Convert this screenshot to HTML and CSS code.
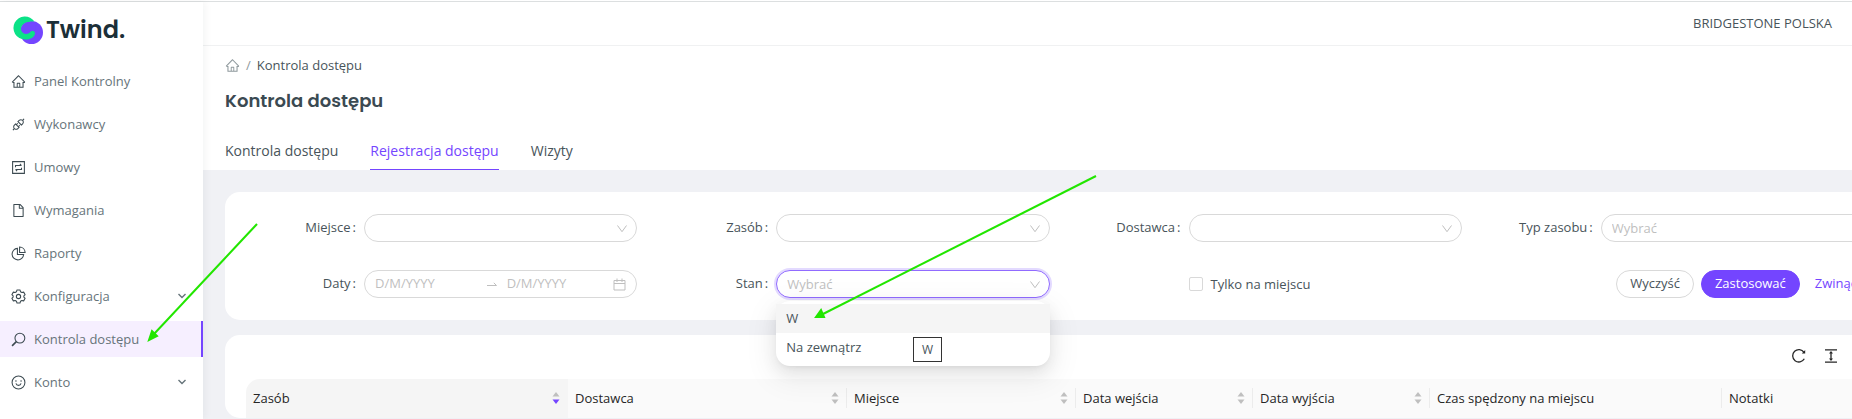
FILE: index.html
```html
<!DOCTYPE html>
<html lang="pl">
<head>
<meta charset="utf-8">
<title>Kontrola dostępu – Twind</title>
<link rel="stylesheet" href="styles.css">
</head>
<body>
<svg class="sprite" aria-hidden="true">
  <symbol id="i-home" viewBox="0 0 1024 1024"><path d="M946.500 505L560.100 118.800l-25.900-25.900a31.500 31.500 0 0 0-44.400 0L77.500 505a63.900 63.900 0 0 0-18.800 46c.4 35.200 29.700 63.300 64.900 63.300h42.500V940h691.800V614.300h43.400c17.100 0 33.200-6.700 45.300-18.800a63.600 63.600 0 0 0 18.700-45.300c0-17-6.700-33.100-18.800-45.200zM568 868H456V664h112v204zm217.900-325.700V868H632V640c0-22.100-17.900-40-40-40H432c-22.100 0-40 17.900-40 40v228H238.100V542.300h-96l370-369.700 23.100 23.100L882 542.300h-96.100z"/></symbol>
  <symbol id="i-api" viewBox="0 0 1024 1024"><path d="M917.700 148.800l-42.400-42.400c-1.600-1.600-3.600-2.300-5.700-2.300s-4.100.8-5.700 2.300l-76.100 76.100a199.270 199.270 0 0 0-112.100-34.300c-51.200 0-102.400 19.500-141.500 58.600L432.300 308.700a8.030 8.030 0 0 0 0 11.300L704 591.700c1.600 1.600 3.600 2.300 5.700 2.300 2 0 4.100-.8 5.700-2.300l101.900-101.900c68.900-69 77-175.700 24.300-253.500l76.100-76.100c3.100-3.200 3.100-8.300 0-11.400zM769.100 441.700l-59.400 59.400-186.800-186.800 59.400-59.400c24.900-24.900 58.100-38.700 93.400-38.700 35.300 0 68.400 13.700 93.400 38.700 24.900 24.900 38.700 58.100 38.700 93.400 0 35.300-13.800 68.400-38.700 93.400zm-190.200 105a8.030 8.030 0 0 0-11.300 0L501 613.300 410.700 523l66.700-66.700c3.100-3.100 3.100-8.200 0-11.300L441 408.600a8.030 8.030 0 0 0-11.300 0L363 475.300l-43-43a7.850 7.850 0 0 0-5.700-2.300c-2 0-4.100.8-5.700 2.300L206.800 534.200c-68.900 69-77 175.700-24.300 253.500l-76.100 76.100a8.030 8.030 0 0 0 0 11.300l42.400 42.400c1.600 1.600 3.600 2.300 5.700 2.300s4.100-.8 5.700-2.300l76.100-76.100c33.700 22.900 72.900 34.300 112.100 34.300 51.200 0 102.400-19.500 141.500-58.600l101.900-101.900c3.100-3.100 3.100-8.200 0-11.300l-43-43 66.700-66.700c3.100-3.100 3.100-8.200 0-11.300l-36.600-36.200zM441.700 769.100a131.320 131.320 0 0 1-93.400 38.700c-35.300 0-68.400-13.700-93.400-38.700a131.320 131.320 0 0 1-38.700-93.400c0-35.300 13.700-68.400 38.700-93.400l59.400-59.400 186.800 186.800-59.400 59.400z"/></symbol>
  <symbol id="i-contract" viewBox="0 0 14 14"><g fill="none" stroke="currentColor"><path d="M1.500 1.500h11v11h-11z"/><path d="M4.200 6.800V5.200h5.400M8.300 3.700l1.500 1.500M9.800 7.200v1.600H4.400M5.700 10.300L4.200 8.800"/></g></symbol>
  <symbol id="i-file" viewBox="0 0 1024 1024"><path d="M854.600 288.600L639.400 73.400c-6-6-14.100-9.400-22.600-9.400H192c-17.700 0-32 14.300-32 32v832c0 17.700 14.300 32 32 32h640c17.700 0 32-14.300 32-32V311.300c0-8.500-3.400-16.700-9.400-22.700zM790.200 326H602V137.800L790.200 326zm1.800 562H232V136h302v216a42 42 0 0 0 42 42h216v494z"/></symbol>
  <symbol id="i-pie" viewBox="0 0 14 14"><g fill="none" stroke="currentColor"><path d="M6 2.200A5.400 5.400 0 1 0 11.800 8H6z"/><path d="M8 .9V6h5.200A5.400 5.400 0 0 0 8 .9z"/></g></symbol>
  <symbol id="i-gear" viewBox="0 0 14 14"><g fill="none" stroke="currentColor" stroke-linejoin="round"><path d="M5.600.9h2.800l.5 1.700 1.200.7 1.700-.4 1.400 2.400L12 6.500v1l1.200 1.200-1.400 2.400-1.700-.4-1.200.7-.5 1.700H5.600l-.5-1.700-1.200-.7-1.700.4L.8 8.700 2 7.500v-1L.8 5.300l1.400-2.400 1.700.4 1.200-.7z"/><circle cx="7" cy="7" r="2"/></g></symbol>
  <symbol id="i-search" viewBox="0 0 14 14"><g fill="none" stroke="currentColor"><circle cx="8.300" cy="5.700" r="4.600"/><path d="M5 9L1 13" stroke-width="1.500"/></g></symbol>
  <symbol id="i-smile" viewBox="0 0 14 14"><circle cx="7" cy="7" r="6" fill="none" stroke="currentColor"/><path d="M4.600 7.900a2.500 2.500 0 0 0 4.800 0" fill="none" stroke="currentColor"/><circle cx="4.600" cy="5.500" r=".7"/><circle cx="9.400" cy="5.500" r=".7"/></symbol>
  <symbol id="i-down" viewBox="0 0 12 12"><path d="M1.500 2.500L6 8.700l4.500-6.200" fill="none" stroke="currentColor"/></symbol>
  <symbol id="i-chevron" viewBox="0 0 10 10"><path d="M1.500 3L5 6.500 8.500 3" fill="none" stroke="currentColor" stroke-width="1.400"/></symbol>
  <symbol id="i-swap" viewBox="0 0 12 12"><path d="M1 7.500h9.500L7.800 4.800" fill="none" stroke="currentColor"/></symbol>
  <symbol id="i-calendar" viewBox="0 0 13 13"><path d="M1 2.500h11v9.500H1zM1 5.500h11M4 .5v3.500M9 .5v3.500" fill="none" stroke="currentColor"/></symbol>
  <symbol id="i-sort-up" viewBox="0 0 8 5"><path d="M4 0l3.500 4.500h-7z"/></symbol>
  <symbol id="i-sort-down" viewBox="0 0 8 5"><path d="M4 5L.5.500h7z"/></symbol>
  <symbol id="i-reload" viewBox="0 0 16 16"><path d="M13.300 10.800A6.200 6.200 0 1 1 13 4.300" fill="none" stroke="currentColor" stroke-width="1.300"/><path d="M14.200 1.900v3.600h-3.400z"/></symbol>
  <symbol id="i-height" viewBox="0 0 16 16"><path d="M2 1.800h12M2 14.200h12M8 4.500v7" fill="none" stroke="currentColor" stroke-width="1.300"/><path d="M8 3l2 2.600H6zM8 13l2-2.600H6z"/></symbol>
</svg>

<div class="app">
  <aside class="sidebar">
    <a class="logo" href="#">
      <svg class="logo-mark" viewBox="0 0 30 28" aria-hidden="true">
        <circle cx="18.500" cy="16.500" r="11.500" fill="#7445ff"/>
        <path d="M21.500 5.600A11.500 11.500 0 1 0 12 23.500C17 24 21.800 21.500 22 17.300c.1-2.300-2.900-3.600-4.500-1.700-2 2.600-5.300 2.800-7.400 1-2.500-2.200-2.300-5.800.2-8 3-2.600 7.300-3.400 11.200-3z" fill="#0be287"/>
        <path d="M8.800 15.600c-1.800-3 .2-7.400 4.200-9 3.500-1.400 8-1 10.500.2L22 15c-1.500-1.500-3.500-.9-4.500.6-2.200 3-6.800 3-8.700 0z" fill="#7445ff"/>
      </svg>
      <span class="logo-text">Twind.</span>
    </a>
    <nav class="menu">
      <a class="menu-item" href="#"><svg class="icon"><use href="#i-home"/></svg><span>Panel Kontrolny</span></a>
      <a class="menu-item" href="#"><svg class="icon"><use href="#i-api"/></svg><span>Wykonawcy</span></a>
      <a class="menu-item" href="#"><svg class="icon"><use href="#i-contract"/></svg><span>Umowy</span></a>
      <a class="menu-item" href="#"><svg class="icon"><use href="#i-file"/></svg><span>Wymagania</span></a>
      <a class="menu-item" href="#"><svg class="icon"><use href="#i-pie"/></svg><span>Raporty</span></a>
      <a class="menu-item" href="#"><svg class="icon"><use href="#i-gear"/></svg><span>Konfiguracja</span><svg class="menu-arrow"><use href="#i-chevron"/></svg></a>
      <a class="menu-item is-active" href="#" aria-current="page"><svg class="icon"><use href="#i-search"/></svg><span>Kontrola dostępu</span></a>
      <a class="menu-item" href="#"><svg class="icon"><use href="#i-smile"/></svg><span>Konto</span><svg class="menu-arrow"><use href="#i-chevron"/></svg></a>
    </nav>
  </aside>

  <main class="main">
    <header class="topbar"><span>BRIDGESTONE POLSKA</span></header>
    <section class="page-head">
      <nav class="breadcrumb" aria-label="Ścieżka">
        <a href="#" aria-label="Strona główna"><svg class="icon"><use href="#i-home"/></svg></a>
        <span class="slash">/</span>
        <span>Kontrola dostępu</span>
      </nav>
      <h1 class="title">Kontrola dostępu</h1>
      <nav class="tabs">
        <a class="tab" href="#">Kontrola dostępu</a>
        <a class="tab is-active" href="#">Rejestracja dostępu</a>
        <a class="tab" href="#">Wizyty</a>
      </nav>
    </section>

    <div class="content">
      <form class="card filters">
        <div class="field">
          <label for="place">Miejsce<span class="colon">:</span></label>
          <div class="control"><select id="place"><option></option></select><svg class="caret"><use href="#i-down"/></svg></div>
        </div>
        <div class="field">
          <label for="asset">Zasób<span class="colon">:</span></label>
          <div class="control"><select id="asset"><option></option></select><svg class="caret"><use href="#i-down"/></svg></div>
        </div>
        <div class="field">
          <label for="vendor">Dostawca<span class="colon">:</span></label>
          <div class="control"><select id="vendor"><option></option></select><svg class="caret"><use href="#i-down"/></svg></div>
        </div>
        <div class="field">
          <label for="type">Typ zasobu<span class="colon">:</span></label>
          <div class="control"><select id="type"><option>Wybrać</option></select><svg class="caret"><use href="#i-down"/></svg></div>
        </div>
        <div class="field">
          <label for="from">Daty<span class="colon">:</span></label>
          <div class="range">
            <input id="from" type="text" placeholder="D/M/YYYY">
            <svg class="swap"><use href="#i-swap"/></svg>
            <input type="text" placeholder="D/M/YYYY" aria-label="Data końcowa">
            <svg class="calendar"><use href="#i-calendar"/></svg>
          </div>
        </div>
        <div class="field">
          <label for="state">Stan<span class="colon">:</span></label>
          <div class="control is-open">
            <select id="state"><option>Wybrać</option></select><svg class="caret"><use href="#i-down"/></svg>
            <div class="dropdown" role="listbox" aria-label="Stan">
              <div class="option is-hover" role="option">W</div>
              <div class="option" role="option">Na zewnątrz</div>
              <div class="tooltip" role="tooltip">W</div>
            </div>
          </div>
        </div>
        <div class="field check-field">
          <label class="check"><input type="checkbox"><span>Tylko na miejscu</span></label>
        </div>
        <div class="actions">
          <button class="btn" type="reset">Wyczyść</button>
          <button class="btn btn-primary" type="button">Zastosować</button>
          <button class="btn btn-link" type="button">Zwinąć</button>
        </div>
      </form>

      <section class="card list">
        <div class="toolbar">
          <button class="tool" type="button" aria-label="Odśwież"><svg><use href="#i-reload"/></svg></button>
          <button class="tool" type="button" aria-label="Gęstość"><svg><use href="#i-height"/></svg></button>
        </div>
        <table class="table">
          <colgroup><col class="c-asset"><col class="c-vendor"><col class="c-place"><col class="c-date"><col class="c-date"><col class="c-time"><col></colgroup>
          <thead>
            <tr>
              <th class="is-sorted"><div class="th">Zasób<span class="sorter"><svg><use href="#i-sort-up"/></svg><svg class="on"><use href="#i-sort-down"/></svg></span></div></th>
              <th><div class="th">Dostawca<span class="sorter"><svg><use href="#i-sort-up"/></svg><svg><use href="#i-sort-down"/></svg></span></div></th>
              <th><div class="th">Miejsce<span class="sorter"><svg><use href="#i-sort-up"/></svg><svg><use href="#i-sort-down"/></svg></span></div></th>
              <th><div class="th">Data wejścia<span class="sorter"><svg><use href="#i-sort-up"/></svg><svg><use href="#i-sort-down"/></svg></span></div></th>
              <th><div class="th">Data wyjścia<span class="sorter"><svg><use href="#i-sort-up"/></svg><svg><use href="#i-sort-down"/></svg></span></div></th>
              <th><div class="th">Czas spędzony na miejscu</div></th>
              <th><div class="th">Notatki</div></th>
            </tr>
          </thead>
        </table>
      </section>
    </div>
  </main>
</div>

<svg class="annotations" aria-hidden="true">
  <g stroke="#22e600" stroke-width="2" fill="#22e600">
    <path d="M257 224L154 334"/><path d="M149 340l3-9 5 5z"/>
    <path d="M1096 176L823 314"/><path d="M816 317l5-7 3 7z"/>
  </g>
</svg>
</body>
</html>
```

FILE: styles.css
```css
* { box-sizing: border-box; }

body {
  margin: 0;
  overflow: hidden;
  font: 13px/20px "Open Sans", "Noto Sans", sans-serif;
  color: #48545a;
  background: #f0f1f5;
}

a { color: inherit; text-decoration: none; }
button, input, select { font: inherit; color: inherit; }
svg { fill: currentColor; flex: none; }
.sprite { display: none; }

.app {
  display: flex;
  height: 100vh;
  overflow: hidden;
  padding-top: 2px;
  background: linear-gradient(#fff 1px, #dcdfe0 1px, #dcdfe0 2px, transparent 2px);
}

/* Sidebar */
.sidebar {
  flex: 0 0 203px;
  background: #fff;
  box-shadow: 2px 0 8px rgba(29, 35, 41, .05);
  z-index: 1;
}
.logo {
  display: flex;
  align-items: center;
  gap: 3px;
  height: 56px;
  padding-left: 13px;
}
.logo-mark { width: 30px; height: 28px; }
.logo-text { font: 600 24px/32px Poppins, Lato, sans-serif; color: #1b2f38; }
.menu { display: grid; gap: 7px; padding-top: 5px; }
.menu-item {
  display: flex;
  align-items: center;
  gap: 8px;
  height: 36px;
  padding: 0 16px 0 11px;
  color: #66747a;
}
.menu-item .icon { color: #3d4b52; }
.icon { width: 15px; height: 15px; }
.menu-arrow { width: 10px; height: 10px; margin-left: auto; }
.menu-item.is-active {
  background: #f6efff;
  border-right: 2px solid #7445ff;
}

/* The work area runs past the right edge of the window */
.main { flex: 0 0 auto; width: calc(100% - 135px); }
.topbar {
  display: flex;
  align-items: center;
  justify-content: flex-end;
  height: 44px;
  padding: 0 88px 2px 0;
  background: #fff;
  border-bottom: 1px solid #f0f1f2;
}
.page-head { padding: 9px 22px 0; background: #fff; }
.breadcrumb { display: flex; align-items: center; gap: 6px; }
.breadcrumb a { display: flex; color: #8f999d; }
.slash { color: #8f999d; }
.title {
  margin: 10px 0 0;
  font: 600 18px/32px Poppins, Inter, sans-serif;
  color: #3b4a52;
}
.tabs { display: flex; gap: 32px; margin-top: 16px; }
.tab { padding: 8px 0; font-size: 14px; line-height: 20px; border-bottom: 1px solid transparent; }
.tab.is-active { color: #7445ff; border-color: #7445ff; font-weight: 500; }

.content { display: grid; gap: 15px; padding: 22px 22px 0; }
.card { background: #fff; border-radius: 15px; }

/* Filters */
.filters {
  display: grid;
  grid-template-columns: repeat(4, minmax(0, 1fr));
  gap: 28px 24px;
  padding: 22px 24px;
}
.field { display: grid; grid-template-columns: 115px minmax(0, 1fr); align-items: center; }
.field > label { text-align: right; padding: 0 8px 2px 0; }
.colon { margin-left: 2px; }
.control { position: relative; }
.control select {
  display: block;
  width: 100%;
  height: 28px;
  padding: 0 30px 0 10px;
  appearance: none;
  background: #fff;
  border: 1px solid #d9d9d9;
  border-radius: 14px;
  color: #bfbfbf;
  outline: 0;
}
.caret { position: absolute; right: 9px; top: 9px; width: 12px; height: 12px; color: #bfbfbf; }
.is-open select { border-color: #916bff; box-shadow: 0 0 0 2px rgba(116, 69, 255, .2); }
.range {
  display: flex;
  align-items: center;
  height: 28px;
  padding: 0 10px;
  border: 1px solid #d9d9d9;
  border-radius: 14px;
}
.range input { flex: 1; min-width: 0; padding: 0 0 2px; border: 0; background: none; outline: 0; }
.range input::placeholder { color: #bfbfbf; opacity: 1; }
.swap { width: 12px; height: 12px; margin: 0 9px 0 4px; color: #bfbfbf; }
.calendar { width: 13px; height: 13px; color: #bfbfbf; }

.dropdown {
  position: absolute;
  z-index: 2;
  top: 31px;
  left: 0;
  right: 0;
  padding: 3px 0 4px;
  background: #fff;
  border-radius: 14px;
  box-shadow: 0 3px 6px -4px rgba(0, 0, 0, .12), 0 6px 16px rgba(0, 0, 0, .08), 0 9px 28px 8px rgba(0, 0, 0, .05);
}
.option { padding: 4px 10px 5px; }
.option.is-hover { background: #f5f5f5; }
.tooltip {
  position: absolute;
  left: 50%;
  bottom: 4px;
  padding: 2px 8px 1px;
  font-size: 12px;
  background: #fff;
  border: 1px solid #333;
}

.check { grid-column: 2; display: flex; align-items: center; gap: 8px; }
.field > .check { text-align: left; padding: 0; }
.check input { appearance: none; width: 14px; height: 14px; margin: 0; border: 1px solid #d9d9d9; border-radius: 2px; background: #fff; }
.actions { display: flex; justify-content: flex-end; gap: 7px; }
.btn { height: 28px; padding: 0 13px 2px; border: 1px solid #d9d9d9; border-radius: 14px; background: #fff; white-space: nowrap; }
.btn-primary { background: #7445ff; border-color: #7445ff; color: #fff; font-weight: 500; }
.btn-link { border-color: transparent; color: #7445ff; padding-left: 7px; padding-right: 16px; }

/* List */
.list { padding: 0 21px; }
.toolbar { display: flex; justify-content: flex-end; gap: 16px; height: 44px; align-items: center; padding: 0 38px 2px 0; }
.tool { display: flex; padding: 0; border: 0; background: none; color: #262626; }
.tool svg { width: 16px; height: 16px; }
.table { width: 100%; table-layout: fixed; border-collapse: separate; border-spacing: 0; color: #262626; }
.c-asset { width: 322px; }
.c-vendor { width: 279px; }
.c-place { width: 229px; }
.c-date { width: 177px; }
.c-time { width: 292px; }
.table th { padding: 9px 0 10px; background: #fafafa; font-weight: 400; text-align: left; }
.table th:first-child { border-top-left-radius: 14px; }
.table th.is-sorted { background: #f5f5f5; }
.th { display: flex; align-items: center; justify-content: space-between; padding: 0 7px; border-right: 1px solid #ececec; }
.is-sorted .th { border-color: transparent; }
.sorter { display: grid; gap: 2px; color: #bfbfbf; }
.sorter svg { width: 8px; height: 5px; }
.sorter .on { color: #7445ff; }

.annotations { position: fixed; inset: 0; width: 100%; height: 100%; pointer-events: none; z-index: 3; }
```
